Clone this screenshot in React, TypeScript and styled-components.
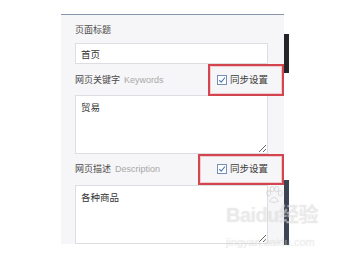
import React from "react";
import styled, { createGlobalStyle } from "styled-components";

const Global = createGlobalStyle`
  html, body { margin: 0; padding: 0; background: #ffffff; }
  body { font-family: "Liberation Sans", "Noto Sans CJK SC", sans-serif; }
`;

const Page = styled.div`
  width: 343px;
  height: 264px;
  position: relative;
  overflow: hidden;
  background: #ffffff;
  padding: 14px 0 0 61px;
  box-sizing: border-box;
  display: flex;
  align-items: flex-start;
`;

const Panel = styled.div`
  width: 223px;
  height: 230px;
  box-sizing: border-box;
  background: #f6f5f7;
  border-top: 1px solid #8796ab;
  padding: 8px 16px 0 14px;
  display: flex;
  flex-direction: column;
`;

const Rail = styled.div`
  width: 5px;
  display: flex;
  flex-direction: column;
`;

const RailBar = styled.div<{ $top: number; $h: number; $c: string }>`
  margin-top: ${(p) => p.$top}px;
  height: ${(p) => p.$h}px;
  background: ${(p) => p.$c};
`;

const Field = styled.div<{ $mt: number }>`
  margin-top: ${(p) => p.$mt}px;
  display: flex;
  flex-direction: column;
`;

const LabelRow = styled.div<{ $gap: number }>`
  height: 14px;
  display: flex;
  align-items: center;
  justify-content: space-between;
  margin-bottom: ${(p) => p.$gap}px;
  position: relative;
`;

const Label = styled.span`
  font-size: 9px;
  line-height: 14px;
  color: #4a4a4a;
  white-space: nowrap;
`;

const Hint = styled.span`
  color: #a8a8a8;
  margin-left: 4px;
`;

const Sync = styled.label`
  display: flex;
  align-items: center;
  gap: 3px;
  font-size: 9.5px;
  line-height: 14px;
  color: #3a3a3a;
  white-space: nowrap;
`;

const Box = styled.span`
  width: 8px;
  height: 8px;
  border: 1px solid #7391b6;
  background: #ffffff;
  display: flex;
  align-items: center;
  justify-content: center;
`;

const Callout = styled.div<{ $left: number; $top: number; $w: number; $h: number }>`
  position: absolute;
  left: ${(p) => p.$left}px;
  top: ${(p) => p.$top}px;
  width: ${(p) => p.$w}px;
  height: ${(p) => p.$h}px;
  box-sizing: border-box;
  border: 2px solid #d3454f;
  box-shadow: inset 0 0 0 1px rgba(230, 150, 155, 0.45);
  pointer-events: none;
`;

const Input = styled.input`
  height: 21px;
  box-sizing: border-box;
  width: 100%;
  border: 1px solid #dedde1;
  background: #ffffff;
  padding: 0 5px;
  font-family: "Liberation Sans", "Noto Sans CJK SC", sans-serif;
  font-size: 9.5px;
  color: #333333;
  outline: none;
`;

const Area = styled.textarea`
  height: 59px;
  box-sizing: border-box;
  width: 100%;
  border: 1px solid #dedde1;
  background: #ffffff;
  padding: 5px 5px;
  font-family: "Liberation Sans", "Noto Sans CJK SC", sans-serif;
  font-size: 9.5px;
  line-height: 14px;
  color: #333333;
  resize: vertical;
  outline: none;
  display: block;
`;

const Watermark = styled.div`
  position: absolute;
  left: 226px;
  top: 186px;
  width: 100px;
  pointer-events: none;
  color: rgba(255, 255, 255, 0.35);
  text-shadow: 0 0 1px rgba(170, 170, 170, 0.4);
  font-family: "Liberation Sans", "Noto Sans CJK SC", sans-serif;
  display: flex;
  flex-direction: column;
  align-items: flex-start;
`;

const Paw = styled.svg`
  margin-left: 38px;
  width: 20px;
  height: 18px;
`;

const Brand = styled.div`
  font-size: 20px;
  font-weight: bold;
  line-height: 22px;
  letter-spacing: -0.5px;
  white-space: nowrap;
`;

const Site = styled.div`
  margin-top: 10px;
  font-size: 11px;
  line-height: 12px;
  white-space: nowrap;
`;

const Check = () => (
  <svg width="8" height="8" viewBox="0 0 8 8">
    <path d="M1.2 4.2 L3.2 6.2 L7 1.5" fill="none" stroke="#4f79ad" strokeWidth="1.1" />
  </svg>
);

export default function App() {
  return (
    <>
      <Global />
      <Page>
        <Panel>
          <Field $mt={0}>
            <LabelRow $gap={6}>
              <Label>页面标题</Label>
            </LabelRow>
            <Input defaultValue="首页" readOnly />
          </Field>
          <Field $mt={9}>
            <LabelRow $gap={8}>
              <Label>
                网页关键字<Hint>Keywords</Hint>
              </Label>
              <Sync>
                <Box>
                  <Check />
                </Box>
                同步设置
              </Sync>
              <Callout $left={133} $top={-9} $w={76} $h={32} />
            </LabelRow>
            <Area defaultValue="贸易" readOnly />
          </Field>
          <Field $mt={8}>
            <LabelRow $gap={9}>
              <Label>
                网页描述<Hint>Description</Hint>
              </Label>
              <Sync>
                <Box>
                  <Check />
                </Box>
                同步设置
              </Sync>
              <Callout $left={123} $top={-8} $w={86} $h={31} />
            </LabelRow>
            <Area defaultValue="各种商品" readOnly />
          </Field>
        </Panel>
        <Rail>
          <RailBar $top={20} $h={39} $c="#23252a" />
          <RailBar $top={107} $h={65} $c="#3c4452" />
        </Rail>
        <Watermark>
          <Paw viewBox="0 0 22 20">
            <g fill="none" stroke="rgba(170,170,170,0.4)" strokeWidth="1">
              <ellipse cx="5" cy="8" rx="2.2" ry="3" />
              <ellipse cx="9" cy="3.5" rx="2.2" ry="3" />
              <ellipse cx="14" cy="3.5" rx="2.2" ry="3" />
              <ellipse cx="18" cy="8" rx="2.2" ry="3" />
              <path d="M6 17 Q11 8 16 17 Q11 20 6 17 Z" />
            </g>
          </Paw>
          <Brand>Baidu经验</Brand>
          <Site>jingyan.baidu.com</Site>
        </Watermark>
      </Page>
    </>
  );
}
